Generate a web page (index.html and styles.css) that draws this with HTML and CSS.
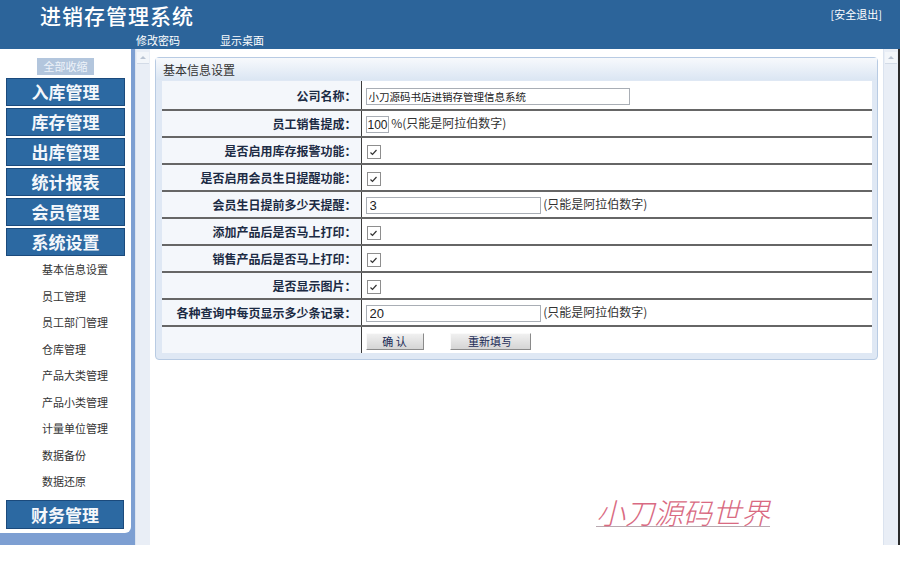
FILE: index.html
```html
<!DOCTYPE html>
<html lang="zh-CN">
<head>
<meta charset="utf-8">
<title>进销存管理系统</title>
<link rel="stylesheet" href="styles.css">
</head>
<body>
<header class="top">
  <div class="top-row">
    <h1 class="title">进销存管理系统</h1>
    <a class="logout">[安全退出]</a>
  </div>
  <nav class="top-nav"><a>修改密码</a><a>显示桌面</a></nav>
</header>
<div class="frames">
  <aside class="side-frame">
    <div class="side-panel">
      <div class="collapse-all">全部收缩</div>
      <div class="menu-head">入库管理</div>
      <div class="menu-head">库存管理</div>
      <div class="menu-head">出库管理</div>
      <div class="menu-head">统计报表</div>
      <div class="menu-head">会员管理</div>
      <div class="menu-head">系统设置</div>
      <ul class="sub-menu">
        <li>基本信息设置</li>
        <li>员工管理</li>
        <li>员工部门管理</li>
        <li>仓库管理</li>
        <li>产品大类管理</li>
        <li>产品小类管理</li>
        <li>计量单位管理</li>
        <li>数据备份</li>
        <li>数据还原</li>
      </ul>
      <div class="menu-head finance">财务管理</div>
    </div>
  </aside>
  <div class="scrollbar"><span class="arrow"></span></div>
  <main class="main">
    <section class="panel">
      <div class="panel-head">基本信息设置</div>
      <div class="panel-body">
        <table class="form">
          <tr class="first">
            <th>公司名称：</th>
            <td><input class="txt name" type="text" value="小刀源码书店进销存管理信息系统"></td>
          </tr>
          <tr>
            <th>员工销售提成：</th>
            <td><input class="txt num small" type="text" value="100"> %(只能是阿拉伯数字)</td>
          </tr>
          <tr>
            <th>是否启用库存报警功能：</th>
            <td><span class="chk"><svg viewBox="0 0 11 11" width="11" height="11"><path d="M2.5 5.5 L4.5 7.5 L8.5 3" fill="none" stroke="#333" stroke-width="1.2"/></svg></span></td>
          </tr>
          <tr>
            <th>是否启用会员生日提醒功能：</th>
            <td><span class="chk"><svg viewBox="0 0 11 11" width="11" height="11"><path d="M2.5 5.5 L4.5 7.5 L8.5 3" fill="none" stroke="#333" stroke-width="1.2"/></svg></span></td>
          </tr>
          <tr>
            <th>会员生日提前多少天提醒：</th>
            <td><input class="txt num mid" type="text" value="3"> (只能是阿拉伯数字)</td>
          </tr>
          <tr>
            <th>添加产品后是否马上打印：</th>
            <td><span class="chk"><svg viewBox="0 0 11 11" width="11" height="11"><path d="M2.5 5.5 L4.5 7.5 L8.5 3" fill="none" stroke="#333" stroke-width="1.2"/></svg></span></td>
          </tr>
          <tr>
            <th>销售产品后是否马上打印：</th>
            <td><span class="chk"><svg viewBox="0 0 11 11" width="11" height="11"><path d="M2.5 5.5 L4.5 7.5 L8.5 3" fill="none" stroke="#333" stroke-width="1.2"/></svg></span></td>
          </tr>
          <tr>
            <th>是否显示图片：</th>
            <td><span class="chk"><svg viewBox="0 0 11 11" width="11" height="11"><path d="M2.5 5.5 L4.5 7.5 L8.5 3" fill="none" stroke="#333" stroke-width="1.2"/></svg></span></td>
          </tr>
          <tr>
            <th>各种查询中每页显示多少条记录：</th>
            <td><input class="txt num mid" type="text" value="20"> (只能是阿拉伯数字)</td>
          </tr>
          <tr class="last">
            <th></th>
            <td><button class="btn ok" type="button">确 认</button><button class="btn reset" type="button">重新填写</button></td>
          </tr>
        </table>
      </div>
    </section>
    <div class="watermark">小刀源码世界</div>
  </main>
  <div class="scrollbar"><span class="arrow"></span></div>
</div>
</body>
</html>
```

FILE: styles.css
```css
* { box-sizing: border-box; }
html, body { margin: 0; padding: 0; background: #fff; }
body {
  width: 900px;
  font-family: "Noto Sans CJK SC", "Liberation Sans", sans-serif;
  font-size: 12px;
  color: #333;
}

/* header */
.top {
  height: 49px;
  background: #2c649a;
  color: #fff;
}
.top-row {
  height: 30px;
  display: flex;
  align-items: center;
  justify-content: space-between;
  padding: 0 18px 0 40px;
}
.title {
  margin: 0;
  font-size: 21px;
  font-weight: 500;
  letter-spacing: 1px;
  line-height: 30px;
}
.logout {
  font-size: 11px;
  color: #fff;
  margin-top: -2px;
}
.top-nav {
  height: 19px;
  display: flex;
  gap: 40px;
  padding-left: 136px;
  font-size: 11px;
  line-height: 21px;
}
.top-nav a { color: #fff; }

/* frames */
.frames {
  display: flex;
  height: 496px;
  border-right: 2px solid #2a2a2a;
}
.side-frame {
  width: 135px;
  flex: none;
  background: #7d9fd2;
  padding: 0 4px 12px 0;
}
.side-panel {
  height: 100%;
  background: #fff;
  border-bottom-right-radius: 6px;
  padding-top: 9px;
  display: flex;
  flex-direction: column;
}
.collapse-all {
  align-self: center;
  width: 57px;
  height: 17px;
  background: #b3c6dd;
  color: #eef3f9;
  font-size: 11px;
  line-height: 17px;
  text-align: center;
  margin-bottom: 3px;
}
.menu-head {
  margin-left: 6px;
  width: 119px;
  height: 28px;
  background: #2c69a2;
  border: 1px solid #1b4a7c;
  color: #f4f7fb;
  font-size: 17px;
  font-weight: 700;
  line-height: 26px;
  text-align: center;
}
.menu-head + .menu-head { margin-top: 2px; }
.sub-menu {
  list-style: none;
  margin: 0;
  padding: 0 0 0 42px;
}
.sub-menu li {
  height: 26.5px;
  line-height: 26.5px;
  font-size: 11px;
  color: #333;
}
.menu-head.finance {
  margin-top: 5px;
  height: 29px;
  line-height: 27px;
  width: 118px;
}

.scrollbar {
  width: 15px;
  flex: none;
  background: #e9eef6;
  border-left: 1px solid #dbe3ef;
  padding: 3px 1px 0 1px;
}
.scrollbar .arrow {
  display: flex;
  justify-content: center;
  align-items: center;
  height: 12px;
  background: #f3f6fa;
  border-bottom: 1px solid #d3dbe7;
}
.scrollbar .arrow::before {
  content: "";
  border-left: 3px solid transparent;
  border-right: 3px solid transparent;
  border-bottom: 3px solid #b9c3d2;
}

/* main */
.main {
  flex: 1;
  display: flex;
  flex-direction: column;
  background: #fff;
}
.panel {
  margin: 8px 5px 0 5px;
  border: 1px solid #b8cbe3;
  border-radius: 4px;
  background: #dfe8f4;
}
.panel-head {
  height: 22px;
  line-height: 24px;
  padding-left: 7px;
  font-size: 12px;
  color: #333;
  background: linear-gradient(#f7f9fc, #dbe6f3);
}
.panel-body {
  padding: 1px 5px 6px 6px;
}
.form {
  width: 100%;
  border-collapse: collapse;
  background: #fff;
}
.form tr { height: 27px; }
.form tr.first { height: 29px; }
.form th, .form td {
  border-bottom: 2px solid #666;
  padding: 0;
  vertical-align: middle;
}
.form tr.last th, .form tr.last td { border-bottom: none; height: 26px; }
.form th {
  width: 199px;
  text-align: right;
  padding-right: 4px;
  font-size: 12px;
  font-weight: 700;
  color: #1c2b44;
  background: #f4f7fb;
}
.form td {
  border-left: 1px solid #3c3c3c;
  padding-left: 4px;
  font-size: 12px;
  color: #333;
}
.txt {
  height: 17px;
  border: 1px solid #a9aeb5;
  padding: 0 2px;
  margin: 0;
  vertical-align: middle;
  color: #222;
  background: #fff;
}
.txt.name {
  width: 264px;
  font-size: 10.5px;
  font-family: "Noto Sans CJK SC", sans-serif;
}
.txt.num {
  font-family: "Liberation Sans", sans-serif;
  font-size: 13px;
  padding: 0 1px;
}
.txt.small { width: 23px; font-size: 12px; padding: 0 0 0 1px; }
.txt.mid { width: 175px; padding-left: 3px; }
.chk {
  display: inline-flex;
  align-items: center;
  justify-content: center;
  width: 14px;
  height: 14px;
  border: 1px solid #8e8e8e;
  background: #fff;
  margin-left: 1px;
  vertical-align: middle;
}
.btn {
  height: 17px;
  padding: 0;
  margin: 0;
  font-family: "Noto Sans CJK SC", sans-serif;
  font-size: 11px;
  color: #1a2a55;
  background: linear-gradient(#f0f0f0, #d5d5d5);
  border: 1px solid;
  border-color: #fafafa #8a8a8a #8a8a8a #fafafa;
  line-height: 15px;
  vertical-align: middle;
}
.btn.ok { width: 58px; }
.btn.reset { width: 81px; margin-left: 26px; }

.watermark {
  margin: 134px 0 0 446px;
  font-size: 29px;
  line-height: 34px;
  font-style: italic;
  font-weight: 300;
  color: #d96a82;
  text-decoration: underline;
  text-decoration-color: #b9a9b0;
  text-decoration-thickness: 1px;
  text-underline-offset: 2px;
  letter-spacing: 0;
  white-space: nowrap;
}
```
